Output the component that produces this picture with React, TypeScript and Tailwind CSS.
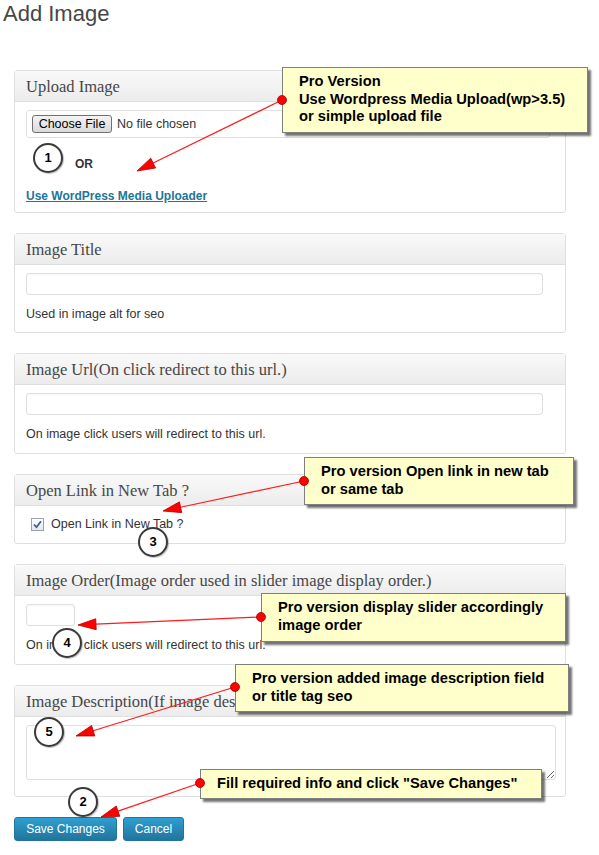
import React from 'react';

const callouts = [
  { left: 282, top: 67, w: 306, h: 66, lines: ['Pro Version', 'Use Wordpress Media Upload(wp>3.5)', 'or simple upload file'] },
  { left: 304, top: 457, w: 270, h: 48, lines: ['Pro version Open link in new tab', 'or same tab'] },
  { left: 261, top: 593, w: 305, h: 49, lines: ['Pro version display slider accordingly', 'image order'] },
  { left: 235, top: 664, w: 334, h: 48, lines: ['Pro version added image description field', 'or title tag seo'] },
  { left: 200, top: 769, w: 342, h: 30, lines: ['Fill required info and click "Save Changes"'] },
];

const arrows = [
  [282, 100, 137, 171],
  [304, 481, 163, 511],
  [261, 617, 78, 625],
  [235, 687, 76, 736],
  [200, 783, 101, 817],
];

const badges = [
  { n: 1, x: 48, y: 158 },
  { n: 3, x: 153, y: 542 },
  { n: 4, x: 67, y: 643 },
  { n: 5, x: 49, y: 732 },
  { n: 2, x: 83, y: 802 },
];

function Panel({ title, children }: { title: string; children: React.ReactNode }) {
  return (
    <div className="border border-[#dfdfdf] rounded-[3px] bg-white">
      <div className="h-[31px] border-b border-[#dfdfdf] bg-gradient-to-b from-[#f9f9f9] to-[#ececec] px-[11px] pt-[2px] leading-[28px] text-[16.5px] text-[#464646] font-['Liberation_Serif',Georgia,serif] whitespace-nowrap overflow-hidden">
        {title}
      </div>
      <div className="px-[11px]">{children}</div>
    </div>
  );
}

function TextBox({ w, h = 22 }: { w: number; h?: number }) {
  return (
    <div
      className="border border-[#dfdfdf] rounded-[3px] bg-white shadow-[inset_0_1px_2px_rgba(0,0,0,0.04)]"
      style={{ width: w, height: h }}
    />
  );
}

export default function App() {
  return (
    <div className="relative w-[599px] h-[855px] bg-white overflow-hidden font-['Liberation_Sans',Arial,sans-serif]">
      <h2 className="pl-[3px] text-[22px] leading-7 text-[#464646]">Add Image</h2>

      <div className="ml-[14px] mt-[42px] w-[552px] flex flex-col gap-5">
        <Panel title="Upload Image">
          <div className="mt-2 h-[28px] w-[524px] border border-[#dfdfdf] rounded-[3px] flex items-center pl-[5px]">
            <div className="h-[18px] w-[80px] border border-[#707070] rounded-[3px] bg-gradient-to-b from-[#f4f4f4] to-[#dadada] text-[12.5px] leading-[16px] text-black text-center">
              Choose File
            </div>
            <span className="ml-[5px] text-[12.5px] text-[#333]">No file chosen</span>
          </div>
          <div className="mt-[18px] pl-[49px] leading-4 text-[12px] font-bold text-[#333]">OR</div>
          <div className="mt-[16px] mb-[8px] leading-4 text-[12px] font-bold text-[#21759b] underline">
            Use WordPress Media Uploader
          </div>
        </Panel>

        <Panel title="Image Title">
          <div className="mt-2">
            <TextBox w={517} />
          </div>
          <div className="mt-[11px] mb-[10px] leading-4 text-[12.5px] text-[#333]">Used in image alt for seo</div>
        </Panel>

        <Panel title="Image Url(On click redirect to this url.)">
          <div className="mt-2">
            <TextBox w={517} />
          </div>
          <div className="mt-[11px] mb-[11px] leading-4 text-[12.5px] text-[#333]">On image click users will redirect to this url.</div>
        </Panel>

        <Panel title="Open Link in New Tab ?">
          <div className="pt-[10px] pb-[11px] pl-[5px] flex items-center gap-[7px] leading-4 text-[12.5px] text-[#333]">
            <div className="w-[13px] h-[13px] border border-[#9aa3ad] bg-gradient-to-b from-white to-[#e4e6ea] flex items-center justify-center">
              <svg width="11" height="11" viewBox="0 0 11 11">
                <path d="M2 5.5 L4.5 8.2 L9 2.2" fill="none" stroke="#3e5f8f" strokeWidth="1.8" />
              </svg>
            </div>
            <span>Open Link in New Tab ?</span>
          </div>
        </Panel>

        <Panel title="Image Order(Image order used in slider image display order.)">
          <div className="mt-2">
            <TextBox w={49} />
          </div>
          <div className="mt-[11px] mb-[11px] leading-4 text-[12.5px] text-[#333]">On image click users will redirect to this url.</div>
        </Panel>

        <Panel title="Image Description(If image description is not empty then it will show on slider.)">
          <textarea className="mt-2 mb-4 block w-[530px] h-[55px] border border-[#dfdfdf] rounded-[3px] bg-white" />
        </Panel>

        <div className="flex gap-[6px]">
          <button className="h-[24px] w-[103px] rounded-[3px] border border-[#21759b] bg-gradient-to-b from-[#2e9fd2] to-[#21759b] text-[12px] text-white">
            Save Changes
          </button>
          <button className="h-[24px] w-[61px] rounded-[3px] border border-[#21759b] bg-gradient-to-b from-[#2e9fd2] to-[#21759b] text-[12px] text-white">
            Cancel
          </button>
        </div>
      </div>

      {badges.map((b) => (
        <div
          key={b.n}
          className="absolute w-[30px] h-[30px] rounded-full border-2 border-[#3a3a3a] bg-white flex items-center justify-center text-[13px] font-bold text-black shadow-[1px_1px_1px_rgba(0,0,0,0.25)]"
          style={{ left: b.x - 15, top: b.y - 15 }}
        >
          {b.n}
        </div>
      ))}

      {callouts.map((c, i) => (
        <div
          key={i}
          className="absolute bg-[#ffffcc] border border-[#7f7f7f] shadow-[3px_3px_2px_rgba(0,0,0,0.55)] pl-4 pt-[5px] text-[14.7px] leading-[17.5px] font-bold text-black whitespace-nowrap"
          style={{ left: c.left, top: c.top, width: c.w, height: c.h }}
        >
          {c.lines.map((l) => (
            <div key={l}>{l}</div>
          ))}
        </div>
      ))}

      <svg className="absolute left-0 top-0 pointer-events-none" width="599" height="855">
        {arrows.map(([x1, y1, x2, y2], i) => {
          const dx = x2 - x1;
          const dy = y2 - y1;
          const len = Math.hypot(dx, dy);
          const ux = dx / len;
          const uy = dy / len;
          const bx = x2 - ux * 18;
          const by = y2 - uy * 18;
          const px = -uy * 5.5;
          const py = ux * 5.5;
          return (
            <g key={i}>
              <line x1={x1} y1={y1} x2={bx} y2={by} stroke="#ff1a1a" strokeWidth="1.2" />
              <polygon
                points={`${x2},${y2} ${bx + px},${by + py} ${bx - px},${by - py}`}
                fill="#ff0000"
                stroke="#b00000"
                strokeWidth="0.8"
              />
              <circle cx={x1} cy={y1} r="4.5" fill="#ff0000" stroke="#a00000" strokeWidth="0.8" />
            </g>
          );
        })}
      </svg>
    </div>
  );
}
